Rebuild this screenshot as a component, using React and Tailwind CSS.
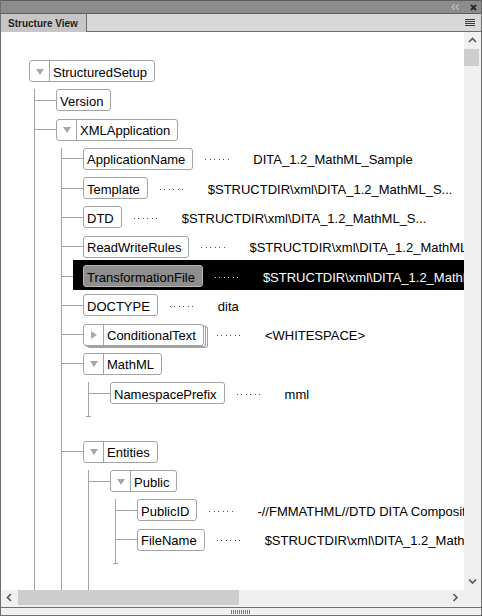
import React from "react";

const tree = {
  label: "StructuredSetup",
  toggle: "down",
  children: [
    { label: "Version" },
    {
      label: "XMLApplication",
      toggle: "down",
      children: [
        { label: "ApplicationName", value: "DITA_1.2_MathML_Sample" },
        { label: "Template", value: "$STRUCTDIR\\xml\\DITA_1.2_MathML_S..." },
        { label: "DTD", value: "$STRUCTDIR\\xml\\DITA_1.2_MathML_S..." },
        { label: "ReadWriteRules", value: "$STRUCTDIR\\xml\\DITA_1.2_MathML_Sample\\rules.txt" },
        { label: "TransformationFile", value: "$STRUCTDIR\\xml\\DITA_1.2_MathML_Sample\\transform.xsl", selected: true },
        { label: "DOCTYPE", value: "dita" },
        { label: "ConditionalText", toggle: "right", stacked: true, value: "<WHITESPACE>" },
        {
          label: "MathML",
          toggle: "down",
          tail: "tick",
          after: true,
          children: [{ label: "NamespacePrefix", value: "mml" }],
        },
        {
          label: "Entities",
          toggle: "down",
          tail: "open",
          children: [
            {
              label: "Public",
              toggle: "down",
              tail: "tick",
              children: [
                { label: "PublicID", value: "-//FMMATHML//DTD DITA Composite//EN" },
                { label: "FileName", value: "$STRUCTDIR\\xml\\DITA_1.2_MathML_Sample\\mathml.dtd" },
              ],
            },
          ],
        },
      ],
    },
  ],
};

function Tri({ dir }) {
  return dir === "down" ? (
    <svg width="8" height="6" viewBox="0 0 8 6">
      <path d="M0 0H8L4 6Z" fill="#a8a8a8" />
    </svg>
  ) : (
    <svg width="6" height="8" viewBox="0 0 6 8">
      <path d="M0 0L6 4L0 8Z" fill="#a8a8a8" />
    </svg>
  );
}

function Box({ label, toggle, selected, stacked }) {
  return (
    <div
      className={`flex h-[22px] shrink-0 items-stretch rounded-[3px] border ${
        selected ? "border-[#b4b4b4] bg-[#8e8e8e]" : "border-[#a3a3a3] bg-white"
      } ${
        stacked
          ? "shadow-[2px_1px_0_-1px_#fff,2px_1px_0_0_#a3a3a3,4px_2px_0_-1px_#fff,4px_2px_0_0_#a3a3a3]"
          : ""
      }`}
    >
      {toggle && (
        <div className="flex w-[20px] items-center justify-center border-r border-[#a3a3a3] pt-px">
          <Tri dir={toggle} />
        </div>
      )}
      <div className="flex items-center whitespace-nowrap pl-[3px] pr-[7px] pt-[2px] text-[13px] leading-none text-black">
        {label}
      </div>
    </div>
  );
}

function Dots({ selected, stacked }) {
  return (
    <div className={`mt-[2px] flex shrink-0 gap-[3.5px] ${stacked ? "ml-[13px]" : "ml-[12px]"}`}>
      {[0, 1, 2, 3, 4, 5].map((i) => (
        <span key={i} className={`block h-px w-px ${selected ? "bg-[#d8d8d8]" : "bg-[#505050]"}`} />
      ))}
    </div>
  );
}

function Row({ node, level }) {
  const content = (
    <>
      <Box label={node.label} toggle={node.toggle} selected={node.selected} stacked={node.stacked} />
      {node.value !== undefined && (
        <>
          <Dots selected={node.selected} stacked={node.stacked} />
          <span
            className={`ml-[24.5px] mt-[2px] shrink-0 whitespace-nowrap text-[13px] leading-none ${
              node.selected ? "text-white" : "text-black"
            }`}
          >
            {node.value}
          </span>
        </>
      )}
    </>
  );
  return (
    <div className="flex h-[22px] items-center">
      {level > 0 && <div className={`${node.selected ? "w-[11px]" : "w-[21px]"} h-px shrink-0 bg-[#a3a3a3]`} />}
      {node.selected ? (
        <div className="-mb-[3px] -mt-[5px] flex min-w-0 flex-1 items-center self-stretch bg-black pb-[3px] pl-[10px] pt-[5px]">
          {content}
        </div>
      ) : (
        content
      )}
    </div>
  );
}

function Node({ node, level }) {
  return (
    <div className={level > 0 ? "mt-[7.3px]" : ""}>
      <Row node={node} level={level} />
      {node.children && (
        <div className={`${level > 0 ? "ml-[26px]" : "ml-[5px]"} border-l border-[#a3a3a3]`}>
          {node.children.map((c) => (
            <Node key={c.label} node={c} level={level + 1} />
          ))}
          {node.tail === "tick" && <div className="-ml-[3px] mt-[12px] h-px w-[5px] bg-[#a3a3a3]" />}
          {node.tail === "open" && <div className="h-[60px]" />}
        </div>
      )}
      {node.after && <div className="h-[16.3px]" />}
    </div>
  );
}

function Chevron({ dir }) {
  const d = {
    up: "M1 5L4.5 1.5L8 5",
    down: "M1 1.5L4.5 5L8 1.5",
    left: "M5 1L1.5 4.5L5 8",
    right: "M1.5 1L5 4.5L1.5 8",
  }[dir];
  const vertical = dir === "up" || dir === "down";
  return (
    <svg width={vertical ? 9 : 7} height={vertical ? 7 : 9} viewBox={vertical ? "0 0 9 7" : "0 0 7 9"}>
      <path d={d} stroke="#5c5c5c" strokeWidth="1.7" fill="none" />
    </svg>
  );
}

export default function App() {
  return (
    <div className="flex h-[616px] w-[482px] flex-col overflow-hidden border-x border-b border-[#6e6e6e] bg-[#f0f0f0] font-['Liberation_Sans',Arial,sans-serif]">
      <div className="flex h-[13px] shrink-0 items-center justify-end gap-[11px] border-t border-[#5e5e5e] bg-[#8c8c8c] pr-[4px]">
        <svg width="8" height="6" viewBox="0 0 8 6">
          <path d="M3.5 0.5L1 3L3.5 5.5M7.5 0.5L5 3L7.5 5.5" stroke="#c2c2c2" strokeWidth="1.1" fill="none" />
        </svg>
        <svg width="7" height="7" viewBox="0 0 7 7">
          <path d="M1 1L6 6M6 1L1 6" stroke="#2a2a2a" strokeWidth="2" fill="none" />
        </svg>
      </div>
      <div className="flex h-[19px] shrink-0 border-t border-[#5e5e5e]">
        <div className="flex w-[86px] items-center border-r border-[#6e6e6e] bg-[#c6c6c6] pl-[7px] text-[10px] font-bold text-[#1e1e1e]">
          Structure View
        </div>
        <div className="flex flex-1 items-center justify-end border-b border-[#6e6e6e] bg-[#d8d8d8] pr-[6px]">
          <svg width="10" height="8" viewBox="0 0 10 8">
            <path d="M0 0.5H10M0 2.5H10M0 4.5H10M0 6.5H10" stroke="#3a3a3a" strokeWidth="1" />
          </svg>
        </div>
      </div>
      <div className="flex h-[558px] shrink-0">
        <div className="min-w-0 flex-1 overflow-hidden bg-white pl-[28px] pt-[28px]">
          <Node node={tree} level={0} />
        </div>
        <div className="flex w-[17px] shrink-0 flex-col bg-[#f0f0f0]">
          <div className="flex h-[17px] items-center justify-center pr-px">
            <Chevron dir="up" />
          </div>
          <div className="h-[17px] w-[15px] bg-[#cdcdcd]" />
          <div className="flex-1" />
          <div className="flex h-[17px] items-center justify-center pr-px">
            <Chevron dir="down" />
          </div>
        </div>
      </div>
      <div className="flex h-[15px] shrink-0">
        <div className="flex w-[17px] items-center justify-center">
          <Chevron dir="left" />
        </div>
        <div className="w-[221px] bg-[#cdcdcd]" />
        <div className="flex-1" />
        <div className="flex w-[17px] items-center justify-center">
          <Chevron dir="right" />
        </div>
        <div className="w-[17px]" />
      </div>
      <div className="h-[2px] shrink-0" />
      <div className="flex h-[8px] shrink-0 items-center justify-center border-t border-[#6e6e6e]">
        <svg width="20" height="4" viewBox="0 0 20 4">
          <path
            d="M0.5 0V4M2.5 0V4M4.5 0V4M6.5 0V4M8.5 0V4M10.5 0V4M12.5 0V4M14.5 0V4M16.5 0V4M18.5 0V4"
            stroke="#7a7a7a"
            strokeWidth="1"
          />
        </svg>
      </div>
    </div>
  );
}
